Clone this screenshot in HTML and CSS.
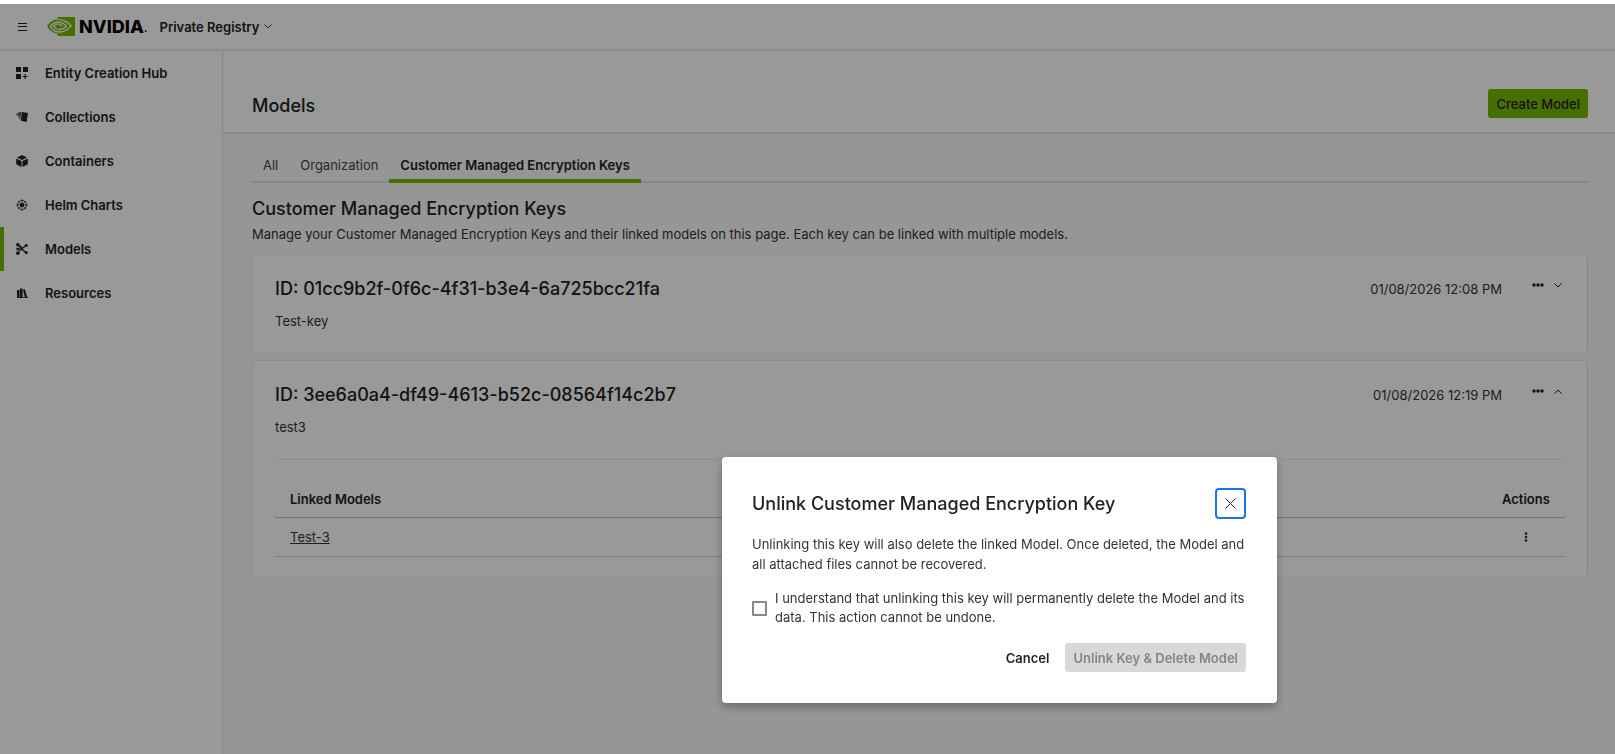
FILE: index.html
```html
<!DOCTYPE html>
<html lang="en">
<head>
<meta charset="utf-8">
<title>Private Registry - Models</title>
<link rel="stylesheet" href="styles.css">
</head>
<body>
<header class="topbar">
	<button class="icon-btn menu" aria-label="Menu">
		<svg width="9" height="8" viewBox="0 0 9 8" stroke="#222" stroke-width="1"><path d="M0 .5h9M0 3.5h9M0 7.5h9"/></svg>
	</button>
	<a href="#" class="logo">
		<svg width="28" height="19" viewBox="0 0 28 19" fill="none">
			<path d="M10.500 0H28v19H10.500v-2.300C5 16 1.500 12.500 0 8.800 2.500 5.200 6 2.800 10.500 2.300z" fill="#76b900"/>
			<path d="M10.500 2.700C16 2.400 20.500 5 24 8.800 20.500 13 16.500 15 12.500 15 7.500 14.800 4.500 12 3.500 8.800 6 6.200 8.500 5.100 11 5.100c4 0 6.500 1.900 8.500 4.200-2.200 2.200-4.500 3.400-7 3.200-3-.2-5-1.800-5.700-3.700 1.500-1.300 3-1.700 4.500-1.600 1.700.1 3 .9 4 2.200" stroke="#fff" stroke-width="1.300"/>
			<path d="M10.500 7.300v5" stroke="#76b900" stroke-width="1.500"/>
		</svg>
		<span>NVIDIA</span><i>.</i>
	</a>
	<button class="product">Private Registry
		<svg width="8" height="5" viewBox="0 0 8 5" fill="none" stroke="#444"><path d="M.5.5 4 4 7.500.5"/></svg>
	</button>
</header>
<div class="page">
	<nav class="sidebar">
		<a href="#">
			<svg viewBox="0 0 12 12"><path d="M0 0h5v5H0zM7 0h5v5H7zM0 7h5v5H0zM8.500 7h1.200v1.900h1.900v1.200H9.700V12H8.500v-1.900H6.600V8.900h1.900z"/></svg>
			Entity Creation Hub</a>
		<a href="#">
			<svg viewBox="0 0 12 12"><path d="M5.800 1 12 1.900 10.600 11 4.900 9.700zM3.300 1.200l1.800-.2-.9 7.800-.6-.4zM1.300 2l1.400-.4.300 5.600zM0 2.900l.9-.3.900 3.200z"/></svg>
			Collections</a>
		<a href="#">
			<svg viewBox="0 0 12 12"><path d="M6 0 11 2.500 6 5 1 2.500zM.2 3.400 5.500 6v6L.2 9.300zM11.800 3.400 6.500 6v6l5.300-2.700z"/></svg>
			Containers</a>
		<a href="#">
			<svg viewBox="0 0 12 12" fill="none" stroke="#222"><circle cx="6" cy="6" r="4.600" stroke-width=".8"/><circle cx="6" cy="6" r="1.700" fill="#222"/><path d="M6 0v12M0 6h12M1.800 1.800l8.400 8.400M10.200 1.800l-8.400 8.400" stroke-width=".7"/></svg>
			Helm Charts</a>
		<a href="#" class="active">
			<svg viewBox="0 0 12 12"><g fill="none" stroke="#222" stroke-width="1.100"><path d="M2 2 5.500 6 2 10M2 6h3.500M5.500 6 10 2.500M5.500 6 10 9.500M2 2l3 1.500L8 8.500"/></g><circle cx="1.800" cy="1.800" r="1.800"/><circle cx="1.800" cy="6" r="1.500"/><circle cx="1.800" cy="10.200" r="1.800"/><circle cx="10.200" cy="2.500" r="1.600"/><circle cx="10.200" cy="9.500" r="1.600"/></svg>
			Models</a>
		<a href="#">
			<svg viewBox="0 0 12 12"><path d="M1 3h2.500v8H1zM4 1.500h2.600V11H4zM7 2.700l1.900-.5L11.500 11H9zM1 10.200h11v.8H1z"/></svg>
			Resources</a>
	</nav>
	<main class="main">
		<div class="page-head">
			<h1>Models</h1>
			<button class="btn create">Create Model</button>
		</div>
		<div class="content">
			<div class="tabs">
				<a href="#">All</a>
				<a href="#">Organization</a>
				<a href="#" class="on">Customer Managed Encryption Keys</a>
			</div>
			<h2>Customer Managed Encryption Keys</h2>
			<p class="desc">Manage your Customer Managed Encryption Keys and their linked models on this page. Each key can be linked with multiple models.</p>

			<section class="card">
				<div class="card-head">
					<h3>ID: 01cc9b2f-0f6c-4f31-b3e4-6a725bcc21fa</h3>
					<time>01/08/2026 12:08 PM</time>
					<div class="card-tools">
						<button class="icon-btn" aria-label="Key actions"><svg width="12" height="4" viewBox="0 0 12 4"><circle cx="2" cy="2" r="1.700"/><circle cx="6" cy="2" r="1.700"/><circle cx="10" cy="2" r="1.700"/></svg></button>
						<button class="icon-btn" aria-label="Expand"><svg width="8" height="5" viewBox="0 0 8 5" fill="none" stroke="#222"><path d="M.5.5 4 4 7.500.5"/></svg></button>
					</div>
				</div>
				<p class="key-name">Test-key</p>
			</section>

			<section class="card">
				<div class="card-head">
					<h3>ID: 3ee6a0a4-df49-4613-b52c-08564f14c2b7</h3>
					<time>01/08/2026 12:19 PM</time>
					<div class="card-tools">
						<button class="icon-btn" aria-label="Key actions"><svg width="12" height="4" viewBox="0 0 12 4"><circle cx="2" cy="2" r="1.700"/><circle cx="6" cy="2" r="1.700"/><circle cx="10" cy="2" r="1.700"/></svg></button>
						<button class="icon-btn" aria-label="Collapse"><svg width="8" height="5" viewBox="0 0 8 5" fill="none" stroke="#222"><path d="M.5 4.500 4 1l3.500 3.500"/></svg></button>
					</div>
				</div>
				<p class="key-name">test3</p>
				<div class="linked">
					<table>
						<tr><th>Linked Models</th><th class="actions">Actions</th></tr>
						<tr>
							<td><a href="#">Test-3</a></td>
							<td class="actions"><button class="icon-btn" aria-label="Model actions"><svg width="4" height="10" viewBox="0 0 4 10"><circle cx="2" cy="1.500" r="1.300"/><circle cx="2" cy="5" r="1.300"/><circle cx="2" cy="8.500" r="1.300"/></svg></button></td>
						</tr>
					</table>
				</div>
			</section>
		</div>
	</main>
</div>

<div class="overlay"></div>
<div class="modal" role="dialog" aria-labelledby="modal-title">
	<div class="modal-head">
		<h2 id="modal-title">Unlink Customer Managed Encryption Key</h2>
		<button class="close" aria-label="Close"><svg width="11" height="11" viewBox="0 0 11 11" stroke="#222" fill="none"><path d="M.5.5l10 10M10.500.5l-10 10"/></svg></button>
	</div>
	<p>Unlinking this key will also delete the linked Model. Once deleted, the Model and all attached files cannot be recovered.</p>
	<div class="confirm">
		<input type="checkbox" id="confirm">
		<label for="confirm">I understand that unlinking this key will permanently delete the Model and its data. This action cannot be undone.</label>
	</div>
	<div class="modal-foot">
		<button class="btn cancel">Cancel</button>
		<button class="btn unlink" disabled>Unlink Key &amp; Delete Model</button>
	</div>
</div>
</body>
</html>
```
FILE: styles.css
```css
*{margin:0;padding:0;box-sizing:border-box;}
body{font-family:Inter,sans-serif;font-size:13px;line-height:20px;color:#222;background:#fff;min-height:100vh;padding-top:4px;display:flex;flex-direction:column;}
a{color:inherit;text-decoration:none;}
button{font:inherit;color:inherit;border:0;background:none;cursor:pointer;}
svg{display:block;fill:#222;}
svg[fill=none]{fill:none;}
h1,h2,h3{font-size:18px;line-height:24px;font-weight:500;}

.topbar{height:47px;display:flex;align-items:center;padding:0 18px;border-bottom:2px solid #e6e6e6;}
.icon-btn{display:flex;align-items:center;justify-content:center;}
.logo{display:flex;align-items:center;margin-left:20px;color:#000;}
.logo span{font:800 18px/20px Inter,sans-serif;margin-left:4px;}
.logo i{font-style:normal;}
.product{display:flex;align-items:center;gap:5px;margin-left:12px;font-weight:600;}

.page{flex:1;display:flex;}
.sidebar{width:223px;flex:none;border-right:1px solid #e0e0e0;}
.sidebar a{display:flex;align-items:center;gap:17px;height:44px;padding-left:12px;border-left:4px solid transparent;font-weight:600;}
.sidebar .active{border-color:#76b900;}
.sidebar svg{width:12px;height:12px;}

.main{flex:1;min-width:0;background:#fafafa;}
.page-head{display:flex;align-items:flex-end;justify-content:space-between;height:83px;padding:0 27px 14px 29px;background:#fff;border-bottom:2px solid #e6e6e6;}
.btn{height:29px;padding:0 8px;border-radius:3px;font-weight:500;}
.create{background:#76b900;}
.content{padding:17px 27px 0 29px;}
.tabs{display:flex;border-bottom:2px solid #e0e0e0;}
.tabs a{height:32px;padding:4px 11px 0;margin-bottom:-2px;color:#444;}
.tabs .on{font-weight:600;border-bottom:4px solid #76b900;color:#222;}
.content h2{margin-top:14px;}
.desc{margin:3px 0 10px;}
.desc,.key-name,.card-head time,td,.modal p,.modal label{color:#333;}

.card{background:#fff;border:1px solid #f0f0f0;border-right-color:#e0e0e0;border-radius:4px;padding:22px 22px 20px;margin-bottom:6px;}
.card-head{display:flex;align-items:center;}
.card-head time{margin-left:auto;}
.card-tools{display:flex;gap:10px;margin:0 3px 8px 30px;}
.key-name{margin:10px 0 2px;}
.linked{border-top:1px solid #f0f0f0;margin-top:22px;padding-top:22px;}
table{width:100%;border-collapse:collapse;}
th,td{text-align:left;padding:0 15px;}
th{font-weight:600;height:35px;border-bottom:1px solid #bbb;}
td{height:39px;border-bottom:1px solid #ccc;}
td a{text-decoration:underline;}
.actions{width:78px;}
td .icon-btn{margin:0 auto;}

.overlay{position:fixed;top:4px;left:0;right:0;bottom:0;background:rgba(0,0,0,.4);}
.modal{position:fixed;top:457px;right:338px;width:555px;padding:31px 31px 31px 30px;background:#fff;border-radius:4px;box-shadow:0 4px 10px rgba(0,0,0,.3);}
.modal-head{display:flex;align-items:center;justify-content:space-between;margin-bottom:15px;}
.close{width:31px;height:31px;display:flex;align-items:center;justify-content:center;border:2px solid #1a73e8;border-radius:4px;}
.confirm{display:flex;align-items:center;gap:8px;margin:15px 0 16px;line-height:19px;}
.confirm input{appearance:none;flex:none;width:15px;height:15px;border:2px solid #888;border-radius:1px;}
.modal-foot{display:flex;justify-content:flex-end;gap:8px;}
.cancel{font-weight:600;}
.unlink{background:#d8d8d8;color:#858585;font-weight:600;}
```
